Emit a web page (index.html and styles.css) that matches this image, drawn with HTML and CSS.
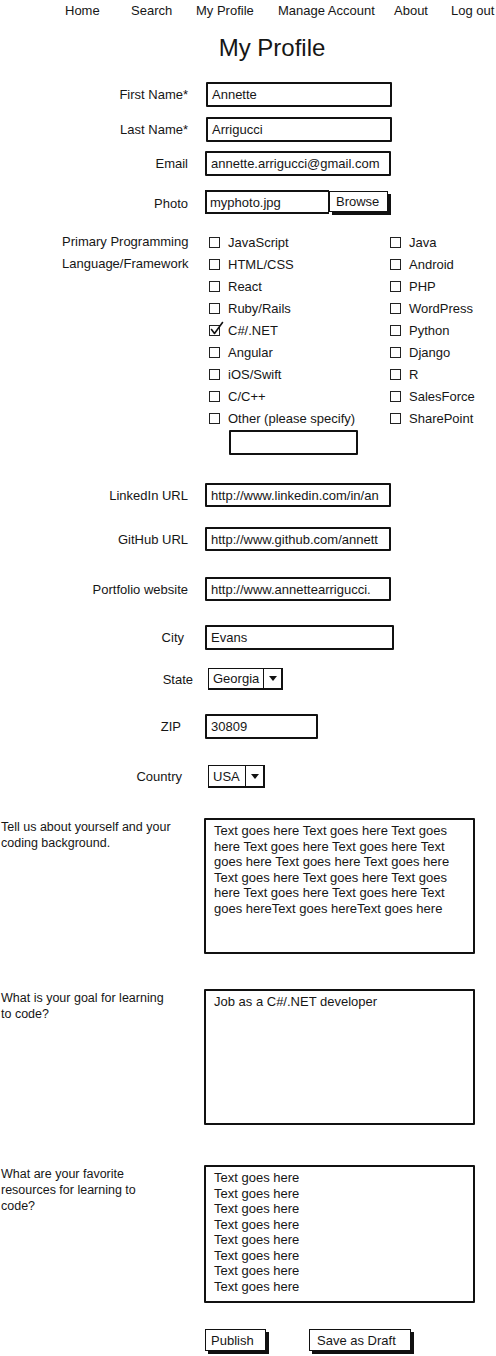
FILE: index.html
```html
<!DOCTYPE html>
<html lang="en">
<head>
<meta charset="utf-8">
<title>My Profile</title>
<link rel="stylesheet" href="styles.css">
</head>
<body>
<nav class="nav">
  <span class="nav-item n1">Home</span>
  <span class="nav-item n2">Search</span>
  <span class="nav-item n3">My Profile</span>
  <span class="nav-item n4">Manage Account</span>
  <span class="nav-item n5">About</span>
  <span class="nav-item n6">Log out</span>
</nav>
<h1 class="title">My Profile</h1>
<form class="form">
  <div class="row r-first">
    <label class="lbl">First Name*</label>
    <div class="field w-186">Annette</div>
  </div>
  <div class="row r-last">
    <label class="lbl">Last Name*</label>
    <div class="field w-186">Arrigucci</div>
  </div>
  <div class="row r-email">
    <label class="lbl">Email</label>
    <div class="field w-186">annette.arrigucci@gmail.com</div>
  </div>
  <div class="row r-photo">
    <label class="lbl">Photo</label>
    <div class="file">
      <div class="file-name">myphoto.jpg</div>
      <div class="btn btn-browse">Browse</div>
    </div>
  </div>
  <div class="langs">
    <div class="langs-label">Primary Programming<br>Language/Framework</div>
    <div class="langs-body">
      <div class="check-grid">
        <div class="check"><span class="box"></span>JavaScript</div>
        <div class="check"><span class="box"></span>Java</div>
        <div class="check"><span class="box"></span>HTML/CSS</div>
        <div class="check"><span class="box"></span>Android</div>
        <div class="check"><span class="box"></span>React</div>
        <div class="check"><span class="box"></span>PHP</div>
        <div class="check"><span class="box"></span>Ruby/Rails</div>
        <div class="check"><span class="box"></span>WordPress</div>
        <div class="check"><span class="box checked"><svg class="tick" width="16" height="16" viewBox="0 0 16 16"><path d="M2.5 8.5 L5.5 12.5 L13.5 1.5" fill="none" stroke="#111" stroke-width="1.6" stroke-linecap="round" stroke-linejoin="round"/></svg></span>C#/.NET</div>
        <div class="check"><span class="box"></span>Python</div>
        <div class="check"><span class="box"></span>Angular</div>
        <div class="check"><span class="box"></span>Django</div>
        <div class="check"><span class="box"></span>iOS/Swift</div>
        <div class="check"><span class="box"></span>R</div>
        <div class="check"><span class="box"></span>C/C++</div>
        <div class="check"><span class="box"></span>SalesForce</div>
        <div class="check"><span class="box"></span>Other (please specify)</div>
        <div class="check"><span class="box"></span>SharePoint</div>
      </div>
      <div class="field other"></div>
    </div>
  </div>
  <div class="row r-linkedin">
    <label class="lbl">LinkedIn URL</label>
    <div class="field w-186 url">http://www.linkedin.com/in/an</div>
  </div>
  <div class="row r-github">
    <label class="lbl">GitHub URL</label>
    <div class="field w-186 url">http://www.github.com/annett</div>
  </div>
  <div class="row r-portfolio">
    <label class="lbl">Portfolio website</label>
    <div class="field w-186 url">http://www.annettearrigucci.</div>
  </div>
  <div class="row r-city">
    <label class="lbl lbl-city">City</label>
    <div class="field w-189">Evans</div>
  </div>
  <div class="row r-state">
    <label class="lbl lbl-state">State</label>
    <div class="select">
      <div class="select-value sv-state">Georgia</div>
      <div class="select-arrow"><span class="tri"></span></div>
    </div>
  </div>
  <div class="row r-zip">
    <label class="lbl lbl-zip">ZIP</label>
    <div class="field w-113">30809</div>
  </div>
  <div class="row r-country">
    <label class="lbl lbl-country">Country</label>
    <div class="select sel-country">
      <div class="select-value sv-country">USA</div>
      <div class="select-arrow"><span class="tri"></span></div>
    </div>
  </div>
  <div class="qrow q-about">
    <div class="qlabel">Tell us about yourself and your<br>coding background.</div>
    <div class="area area-about">Text goes here Text goes here Text goes<br>here Text goes here Text goes here Text<br>goes here Text goes here Text goes here<br>Text goes here Text goes here Text goes<br>here Text goes here Text goes here Text<br>goes hereText goes hereText goes here</div>
  </div>
  <div class="qrow q-goal">
    <div class="qlabel">What is your goal for learning<br>to code?</div>
    <div class="area area-goal">Job as a C#/.NET developer</div>
  </div>
  <div class="qrow q-res">
    <div class="qlabel">What are your favorite<br>resources for learning to<br>code?</div>
    <div class="area area-res">Text goes here<br>Text goes here<br>Text goes here<br>Text goes here<br>Text goes here<br>Text goes here<br>Text goes here<br>Text goes here</div>
  </div>
  <div class="actions">
    <div class="btn btn-publish">Publish</div>
    <div class="btn btn-draft">Save as Draft</div>
  </div>
</form>
</body>
</html>
```

FILE: styles.css
```css
* { box-sizing: border-box; }

html, body {
  margin: 0;
  padding: 0;
  background: #fff;
}

body {
  font-family: "Liberation Sans", Arial, sans-serif;
  font-size: 13px;
  color: #161616;
  width: 496px;
  height: 1356px;
  overflow: hidden;
}

/* navigation */
.nav {
  display: flex;
  align-items: center;
  height: 20px;
  padding-left: 65px;
  font-size: 13px;
  white-space: nowrap;
}
.nav-item { flex: none; }
.n1 { width: 66px; }
.n2 { width: 65px; }
.n3 { width: 82px; }
.n4 { width: 116px; }
.n5 { width: 57px; }

.title {
  margin: 14px 0 0 48px;
  font-size: 24px;
  line-height: 28px;
  font-weight: normal;
  text-align: center;
}

/* form rows */
.form { display: block; }

.row {
  display: flex;
  align-items: center;
}
.lbl {
  flex: none;
  width: 188px;
  text-align: right;
  margin-right: 17px;
}
.lbl-city { width: 184px; margin-right: 21px; }
.lbl-state { width: 193px; margin-right: 15px; }
.lbl-zip { width: 181px; margin-right: 24px; }
.lbl-country { width: 182px; margin-right: 26px; }

.field {
  height: 25px;
  border: 2px solid #111;
  border-right-width: 2.5px;
  border-bottom-width: 2.5px;
  border-radius: 1px;
  padding: 0 0 0 4px;
  display: flex;
  align-items: center;
  white-space: nowrap;
  overflow: hidden;
  background: #fff;
}
.w-186 { width: 186px; }
.w-189 { width: 189px; }
.w-113 { width: 113px; }
.url { height: 24px; }

.r-first { margin-top: 20px; }
.r-first .lbl, .r-last .lbl { margin-right: 18px; }
.r-last { margin-top: 10px; }
.r-email { margin-top: 9px; }
.r-photo { margin-top: 15px; }

/* file chooser */
.file {
  display: flex;
  height: 24px;
}
.file-name {
  width: 124px;
  border: 2px solid #111;
  border-right: 1px solid #111;
  padding-left: 3px;
  display: flex;
  align-items: center;
  margin-top: -1px;
  height: 24px;
}
.btn {
  border: 1.5px solid #111;
  box-shadow: 3px 3px 0 #111;
  display: flex;
  align-items: center;
  background: #fff;
  white-space: nowrap;
}
.btn-browse {
  width: 59px;
  height: 21px;
  padding-left: 6px;
}

/* languages */
.langs {
  display: flex;
  margin-top: 16px;
  padding-left: 62px;
}
.langs-label {
  width: 147px;
  line-height: 22px;
  flex: none;
}
.langs-body { flex: none; }
.check-grid {
  display: grid;
  grid-template-columns: 181px 110px;
  grid-auto-rows: 22px;
}
.check {
  display: flex;
  align-items: center;
  white-space: nowrap;
}
.box {
  position: relative;
  flex: none;
  width: 11px;
  height: 11px;
  border: 1.5px solid #222;
  margin-right: 8px;
}
.tick {
  position: absolute;
  left: -1px;
  top: -5px;
}
.other {
  width: 129px;
  height: 25px;
  margin: 1px 0 0 20px;
}

.r-linkedin { margin-top: 28px; }
.r-github { margin-top: 20px; }
.r-portfolio { margin-top: 26px; }
.r-city { margin-top: 24px; }
.r-state { margin-top: 18px; }
.r-zip { margin-top: 24px; }
.r-country { margin-top: 26px; }

/* selects */
.select {
  display: flex;
  height: 22px;
  border: 1.5px solid #111;
  border-right-width: 2px;
  border-bottom-width: 2px;
}
.sel-country { height: 23px; }
.select-value {
  display: flex;
  align-items: center;
  padding-left: 4px;
  border-right: 1.5px solid #111;
}
.sv-state { width: 55px; }
.sv-country { width: 37px; }
.select-arrow {
  width: 17px;
  display: flex;
  align-items: center;
  justify-content: center;
}
.tri {
  width: 0;
  height: 0;
  border-left: 4.5px solid transparent;
  border-right: 4.5px solid transparent;
  border-top: 5px solid #111;
}

/* question rows */
.qrow {
  display: flex;
  align-items: flex-start;
}
.qlabel {
  flex: none;
  width: 204px;
  padding: 1px 0 0 1px;
  font-size: 12.5px;
  line-height: 16px;
  white-space: nowrap;
}
.area {
  flex: none;
  width: 271px;
  border: 2px solid #111;
  border-right-width: 2.5px;
  border-bottom-width: 2.5px;
  border-radius: 1px;
  padding: 3px 8px;
  line-height: 15.5px;
  white-space: nowrap;
}
.q-about { margin-top: 30px; }
.area-about { height: 136px; }
.q-goal { margin-top: 35px; }
.area-goal { height: 136px; }
.q-res { margin-top: 40px; }
.area-res { height: 138px; }

/* actions */
.actions {
  display: flex;
  gap: 43px;
  margin: 26px 0 0 205px;
}
.btn-publish {
  width: 61px;
  height: 22px;
  padding-left: 5px;
}
.btn-draft {
  width: 102px;
  height: 22px;
  padding-left: 7px;
}
```
